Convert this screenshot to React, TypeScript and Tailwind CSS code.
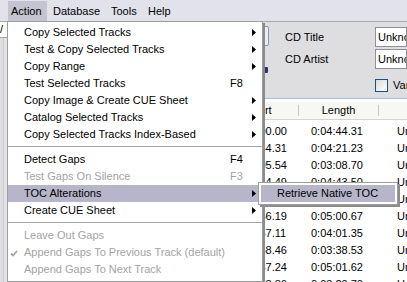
import React from 'react'

type Entry =
  | { sep: true }
  | {
      sep?: false
      label: string
      keyText?: string
      arrow?: boolean
      disabled?: boolean
      checked?: boolean
      active?: boolean
    }

const actionMenu: Entry[] = [
  { label: 'Copy Selected Tracks', arrow: true },
  { label: 'Test & Copy Selected Tracks', arrow: true },
  { label: 'Copy Range', arrow: true },
  { label: 'Test Selected Tracks', keyText: 'F8' },
  { label: 'Copy Image & Create CUE Sheet', arrow: true },
  { label: 'Catalog Selected Tracks', arrow: true },
  { label: 'Copy Selected Tracks Index-Based', arrow: true },
  { sep: true },
  { label: 'Detect Gaps', keyText: 'F4' },
  { label: 'Test Gaps On Silence', keyText: 'F3', disabled: true },
  { label: 'TOC Alterations', arrow: true, active: true },
  { label: 'Create CUE Sheet', arrow: true },
  { sep: true },
  { label: 'Leave Out Gaps', disabled: true },
  { label: 'Append Gaps To Previous Track (default)', disabled: true, checked: true },
  { label: 'Append Gaps To Next Track', disabled: true },
]

const tracks = [
  ['0:00:00.00', '0:04:44.31'],
  ['0:04:44.31', '0:04:21.23'],
  ['0:09:05.54', '0:03:08.70'],
  ['0:12:14.49', '0:04:43.50'],
  ['0:16:58.24', '0:04:57.70'],
  ['0:21:56.19', '0:05:00.67'],
  ['0:26:57.11', '0:04:01.35'],
  ['0:30:58.46', '0:03:38.53'],
  ['0:34:37.24', '0:05:01.62'],
  ['0:39:38.86', '0:03:20.70'],
]

function Arrow() {
  return (
    <svg width="4" height="7" viewBox="0 0 4 7" className="block">
      <path d="M0 0L4 3.5L0 7Z" fill="#000" />
    </svg>
  )
}

function Check() {
  return (
    <svg width="8" height="7" viewBox="0 0 8 7" className="block">
      <path d="M1 3.5L3 5.5L7 1" fill="none" stroke="#a3a3a3" strokeWidth="1.8" />
    </svg>
  )
}

function MenuRow({ item }: { item: Entry }) {
  if (item.sep) {
    return (
      <div className="h-[8px] pt-[3px]">
        <div className="h-[1px] bg-[#a7a7a7]" />
        <div className="h-[1px] bg-white" />
      </div>
    )
  }
  const color = item.disabled ? 'text-[#a3a3a3]' : 'text-black'
  return (
    <div className={`relative flex h-[17px] items-center ${item.active ? 'bg-[#b6b5c9]' : ''} ${color}`}>
      {item.checked && (
        <div className="absolute left-[2px] top-[6px]">
          <Check />
        </div>
      )}
      <div className="w-[222px] whitespace-nowrap pl-[16px]">{item.label}</div>
      <div className="w-[22px] whitespace-nowrap">{item.keyText}</div>
      <div className="w-[4px]">{item.arrow && <Arrow />}</div>
    </div>
  )
}

export default function App() {
  return (
    <div className="relative h-[282px] w-[407px] overflow-hidden bg-[#dedee0] font-['Liberation_Sans',Arial,sans-serif] text-[11px] text-black">
      {/* menu bar */}
      <div className="flex h-[22px] border-b border-[#a8a8ac] bg-[#e1e2ea]">
        <div className="mt-[1px] h-[20px] w-[8px]" />
        <div className="mt-[1px] flex h-[20px] w-[39px] items-center bg-[#c4c3d0] pl-[3px]">Action</div>
        <div className="mt-[1px] flex h-[20px] w-[58px] items-center pl-[6px]">Database</div>
        <div className="mt-[1px] flex h-[20px] w-[37px] items-center pl-[6px]">Tools</div>
        <div className="mt-[1px] flex h-[20px] items-center pl-[6px]">Help</div>
      </div>

      {/* window behind the menu */}
      <div className="flex h-[260px] overflow-hidden">
        <div className="flex w-[8px] shrink-0 flex-col">
          <div className="h-[16px] shrink-0 border-b border-[#a0a0a0] bg-white leading-[15px]">/</div>
          <div className="ml-[3px] flex-1 border-l border-[#c8c8cc] bg-[#e4e4e6]" />
        </div>
        <div className="flex min-w-0 flex-1 flex-col">
          <div className="flex h-[77px] shrink-0 border-b border-[#a9bfd8]">
            <div className="w-[262px] shrink-0">
              <div className="ml-[232px] mt-[4px] h-[20px] w-[29px] rounded-[2px] border border-[#8796b3] bg-[#eceef3]" />
              <div className="ml-[254px] mt-[21px] h-[6px] w-[6px] rounded-[1px] bg-[#28386a]" />
            </div>
            <div className="w-[105px] shrink-0 pl-[15px] pt-[5px]">
              <div className="flex h-[20px] items-center whitespace-nowrap">CD Title</div>
              <div className="mt-[2px] flex h-[20px] items-center whitespace-nowrap">CD Artist</div>
            </div>
            <div className="min-w-0 flex-1 pt-[5px]">
              <div className="flex h-[20px] items-center overflow-hidden whitespace-nowrap border border-[#8e9297] bg-white pl-[2px]">Unknown Title</div>
              <div className="mt-[2px] flex h-[20px] items-center overflow-hidden whitespace-nowrap border border-[#8e9297] bg-white pl-[2px]">Unknown Artist</div>
              <div className="mt-[8px] flex items-center gap-[5px] overflow-hidden whitespace-nowrap">
                <div className="h-[13px] w-[13px] shrink-0 border border-[#1c5180] bg-gradient-to-br from-[#dcdcd7] to-white" />
                <span>Various Artists</span>
              </div>
            </div>
          </div>

          {/* track list */}
          <div className="min-h-0 flex-1 overflow-hidden bg-white pt-[3px]">
            <div className="flex h-[18px] items-center border-b border-[#d6d4cc] bg-[#f7f7f4] whitespace-nowrap">
              <div className="w-[214px] shrink-0" />
              <div className="w-[76px] shrink-0 text-center">Start</div>
              <div className="h-[11px] w-[1px] shrink-0 bg-[#c9c7bd]" />
              <div className="w-[79px] shrink-0 text-center">Length</div>
              <div className="h-[11px] w-[1px] shrink-0 bg-[#c9c7bd]" />
              <div className="flex-1" />
            </div>
            <div className="pt-[3px]">
              {tracks.map(([start, len], i) => (
                <div key={i} className="flex h-[17px] items-center whitespace-nowrap">
                  <div className="w-[214px] shrink-0" />
                  <div className="w-[76px] shrink-0 pl-[13px]">{start}</div>
                  <div className="w-[80px] shrink-0 pl-[13px]">{len}</div>
                  <div className="min-w-0 flex-1 overflow-hidden pl-[19px]">Unknown</div>
                </div>
              ))}
            </div>
          </div>
        </div>
      </div>

      {/* open Action menu */}
      <div className="absolute left-[7px] top-[21px] w-[256px] border border-[#9d9d9d] bg-white pb-[3px] pt-[2px] shadow-[2px_2px_0_0_#8c8c8c]">
        {actionMenu.map((item, i) => (
          <MenuRow key={i} item={item} />
        ))}
      </div>

      {/* TOC Alterations submenu */}
      <div className="absolute left-[258px] top-[182px] w-[140px] border border-[#9d9d9d] bg-white p-[2px] shadow-[2px_2px_0_0_#8c8c8c]">
        <div className="flex h-[17px] items-center whitespace-nowrap bg-[#b6b5c9] pl-[16px]">Retrieve Native TOC</div>
      </div>
    </div>
  )
}
